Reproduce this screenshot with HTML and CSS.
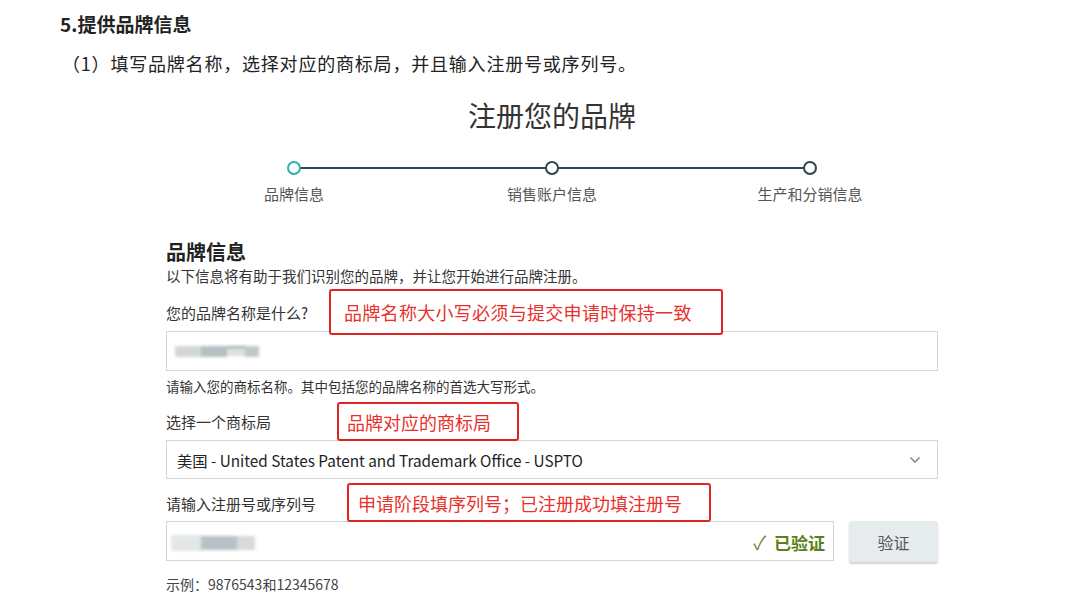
FILE: index.html
```html
<!DOCTYPE html>
<html lang="zh-CN">
<head>
  <meta charset="UTF-8" />
  <meta name="viewport" content="width=device-width, initial-scale=1.0" />
  <link rel="stylesheet" href="styles.css">
</head>
<body>
  <h2 class="doc-title">5.提供品牌信息</h2>
  <p class="doc-step">（1）填写品牌名称，选择对应的商标局，并且输入注册号或序列号。</p>

  <div class="shot">
    <div class="brand-title">注册您的品牌</div>

    <!-- Stepper -->
    <div class="stepper">
      <div class="step active">
        <span class="dot"></span>
        <span class="step-label">品牌信息</span>
      </div>
      <div class="step">
        <span class="dot"></span>
        <span class="step-label">销售账户信息</span>
      </div>
      <div class="step">
        <span class="dot"></span>
        <span class="step-label">生产和分销信息</span>
      </div>
    </div>

    <div class="form-title">品牌信息</div>
    <div class="form-sub">以下信息将有助于我们识别您的品牌，并让您开始进行品牌注册。</div>

    <div class="field-label">
      您的品牌名称是什么?
      <div class="note note-name">品牌名称大小写必须与提交申请时保持一致</div>
    </div>
    <div class="input-box">
      <span class="blur blur-name">
        <i class="b1"></i><i class="b2"></i><i class="b3"></i><i class="b4"></i>
      </span>
    </div>
    <div class="hint">请输入您的商标名称。其中包括您的品牌名称的首选大写形式。</div>

    <div class="field-label label-office">
      选择一个商标局
      <div class="note note-office">品牌对应的商标局</div>
    </div>
    <div class="input-box select-box">
      <span>美国 - United States Patent and Trademark Office - USPTO</span>
      <svg class="chevron" width="12" height="8" viewBox="0 0 12 8">
        <polyline points="1.5,1.5 6,6 10.5,1.5" fill="none" stroke="#8a8a8a" stroke-width="1.6" />
      </svg>
    </div>

    <div class="field-label label-number">
      请输入注册号或序列号
      <div class="note note-number">申请阶段填序列号；已注册成功填注册号</div>
    </div>
    <div class="number-row">
      <div class="input-box number-box">
        <span class="blur blur-number">
          <i class="b5"></i><i class="b6"></i><i class="b7"></i>
        </span>
        <span class="verified"><span class="tick">✓</span> 已验证</span>
      </div>
      <button class="verify-button">验证</button>
    </div>
    <div class="example">示例：9876543和12345678</div>
  </div>
</body>
</html>
```

FILE: styles.css
```css
body {
  margin: 0;
  background-color: #ffffff;
  font-family: "Noto Sans CJK SC", "Noto Sans", sans-serif;
  color: #333;
}

.doc-title {
  margin: 0;
  padding: 12px 0 0 60px;
  font-size: 19px;
  line-height: 24px;
  font-weight: 700;
  color: #222;
}

.doc-step {
  margin: 15px 0 0 0;
  padding-left: 62px;
  font-size: 18px;
  line-height: 24px;
  letter-spacing: 0.8px;
  color: #222;
}

.shot {
  margin-left: 166px;
  width: 772px;
}

.brand-title {
  margin-top: 22px;
  text-align: center;
  font-size: 28px;
  line-height: 36px;
  color: #333;
}

/* stepper */
.stepper {
  margin-top: 28px;
  margin-left: -1px;
  display: grid;
  grid-template-columns: repeat(3, 258px);
}

.step {
  position: relative;
  display: flex;
  flex-direction: column;
  align-items: center;
}

.step:not(:last-child)::after {
  content: "";
  position: absolute;
  top: 6px;
  left: 50%;
  width: 100%;
  height: 2px;
  background-color: #2c4650;
}

.dot {
  position: relative;
  z-index: 1;
  width: 10px;
  height: 10px;
  border: 2px solid #2c4650;
  border-radius: 50%;
  background-color: #fff;
}

.step.active .dot {
  border-color: #2bb0b0;
}

.step-label {
  margin-top: 9px;
  font-size: 15px;
  line-height: 20px;
  color: #555;
}

/* form */
.form-title {
  margin-top: 35px;
  font-size: 20px;
  line-height: 26px;
  font-weight: 700;
  color: #222;
}

.form-sub {
  margin-top: 1px;
  font-size: 14.5px;
  line-height: 20px;
  color: #333;
}

.field-label {
  position: relative;
  margin-top: 17px;
  font-size: 15px;
  line-height: 20px;
  color: #333;
}

.label-office {
  margin-top: 17px;
}

.label-number {
  margin-top: 15px;
}

.note {
  position: absolute;
  z-index: 2;
  display: flex;
  align-items: center;
  padding-left: 12px;
  box-sizing: border-box;
  border: 2px solid #e02424;
  border-radius: 3px;
  background-color: #fff;
  font-size: 18px;
  color: #e8302c;
  white-space: nowrap;
}

.note-name {
  left: 163px;
  top: -14px;
  width: 394px;
  height: 46px;
  padding-left: 13px;
  letter-spacing: 0.3px;
}

.note-office {
  left: 171px;
  top: -10px;
  width: 182px;
  height: 39px;
  padding-left: 8px;
}

.note-number {
  left: 181px;
  top: -11px;
  width: 364px;
  height: 39px;
  padding-left: 9px;
}

.input-box {
  margin-top: 8px;
  height: 40px;
  box-sizing: border-box;
  border: 1px solid #d3d6d6;
  background-color: #fff;
  display: flex;
  align-items: center;
  padding: 0 8px;
}

.hint {
  margin-top: 6px;
  font-size: 13.5px;
  line-height: 18px;
  color: #333;
}

.select-box {
  height: 39px;
  padding: 0 16px 0 10px;
  justify-content: space-between;
  font-size: 15.3px;
  color: #222;
}

.number-row {
  margin-top: 7px;
  display: flex;
  gap: 15px;
}

.number-box {
  margin-top: 0;
  width: 668px;
  justify-content: space-between;
  padding: 0 8px 0 4px;
}

.verified {
  font-size: 17px;
  font-weight: 700;
  color: #5b8019;
}

.tick {
  font-size: 19px;
  font-weight: 400;
  color: #6a8a3a;
  margin-right: 4px;
}

.verify-button {
  width: 89px;
  height: 41px;
  border: none;
  border-radius: 3px;
  background-color: #e6ebee;
  box-shadow: 0 2px 2px rgba(0, 0, 0, 0.18);
  font-family: inherit;
  font-size: 16px;
  color: #555;
}

.example {
  margin-top: 13px;
  font-size: 14px;
  line-height: 18px;
  color: #444;
}

/* redacted values */
.blur {
  display: flex;
  align-items: center;
  filter: blur(1.6px);
}

.blur i {
  display: block;
  height: 11px;
}

.blur-name .b1 { width: 26px; background-color: #d3d7d8; }
.blur-name .b2 { width: 26px; background-color: #b6bfc2; }
.blur-name .b3 { width: 18px; height: 8px; background-color: #dde0e0; border-top: 2px solid #9aa3a8; }
.blur-name .b4 { width: 14px; background-color: #c1c8cb; }

.blur-number { margin-top: 4px; }
.blur-number .b5 { width: 30px; height: 16px; background-color: #e4e7e8; }
.blur-number .b6 { width: 36px; height: 14px; background-color: #b9c1c4; }
.blur-number .b7 { width: 18px; height: 14px; background-color: #d6dadb; }
```
